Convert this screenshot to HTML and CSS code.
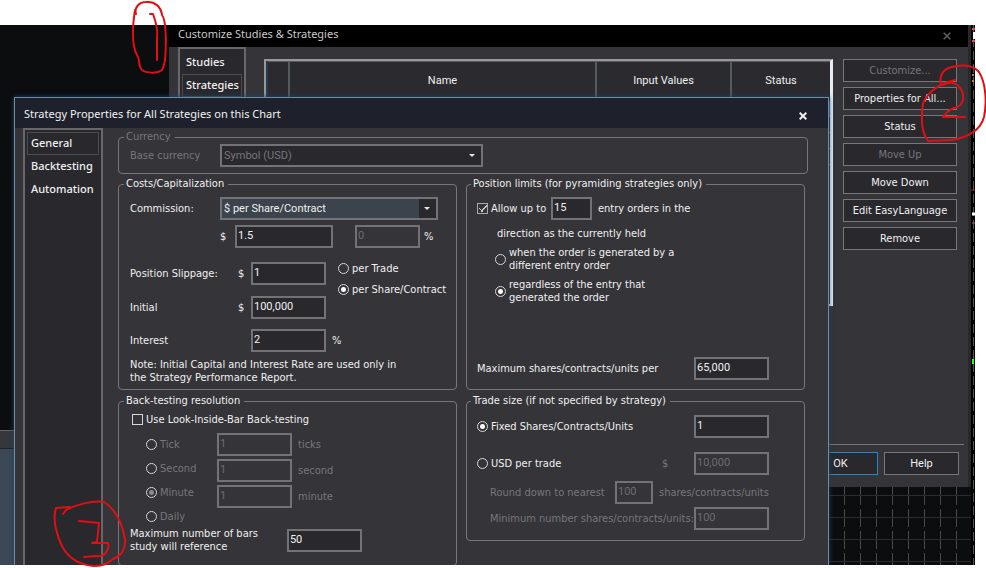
FILE: index.html
```html
<!DOCTYPE html>
<html lang="en">
<head>
<meta charset="utf-8">
<title>Strategy Properties</title>
<link rel="stylesheet" href="styles.css">
</head>
<body>
<main class="desktop">
  <div class="dock" aria-hidden="true"></div>
  <svg class="ticks" viewBox="0 0 4 540" width="4" height="540" aria-hidden="true">
    <path d="M2.500 0V540" stroke="#555" stroke-dasharray="9 4"/>
    <path d="M1 4h3M1 16h3" stroke="#e0455a" stroke-width="2"/><path d="M2 7h2v7h-2z" fill="#fff"/>
    <path d="M1 50h2M1 56h2" stroke="#c87a1e" stroke-width="2"/>
    <path d="M0 165h4" stroke="#c22"/><path d="M1 189h3" stroke="#fff" stroke-width="3"/><path d="M1 198h3" stroke="#a66"/>
    <path d="M1 334h2v5H1z" fill="#1bff1b"/>
  </svg>

  <section class="window studies" aria-label="Customize Studies and Strategies">
    <header class="bar bar-inactive"><h2>Customize Studies &amp; Strategies</h2>
      <button class="close" aria-label="Close studies"><svg viewBox="0 0 8 8" width="8" height="8"><path d="M.7 .7 7.300 7.300M7.300 .7 .7 7.300"/></svg></button></header>
    <div class="studies-body">
      <nav class="side side-small"><a href="#studies">Studies</a><a class="current" href="#strategies">Strategies</a></nav>
      <div class="list">
        <table>
          <thead><tr><th class="c-icon"></th><th>Name</th><th class="c-input">Input Values</th><th class="c-status">Status</th></tr></thead>
          <tbody><tr class="picked"><td></td><td></td><td></td><td></td></tr><tr><td></td><td></td><td></td><td></td></tr><tr><td></td><td></td><td></td><td></td></tr><tr><td></td><td></td><td></td><td></td></tr></tbody>
        </table>
      </div>
      <div class="actions">
        <button class="btn" disabled>Customize...</button>
        <button class="btn">Properties for All...</button>
        <button class="btn">Status</button>
        <button class="btn" disabled>Move Up</button>
        <button class="btn">Move Down</button>
        <button class="btn">Edit EasyLanguage</button>
        <button class="btn">Remove</button>
      </div>
    </div>
    <footer class="studies-foot"><button class="btn primary">OK</button><button class="btn">Help</button></footer>
  </section>

  <section class="window props" aria-label="Strategy Properties">
    <header class="bar"><h1>Strategy Properties for All Strategies on this Chart</h1>
      <button class="close" aria-label="Close properties"><svg viewBox="0 0 8 8" width="8" height="8"><path d="M.7 .7 7.300 7.300M7.300 .7 .7 7.300"/></svg></button></header>
    <div class="props-body">
      <nav class="side"><a class="current" href="#general">General</a><a href="#backtesting">Backtesting</a><a href="#automation">Automation</a></nav>
      <form class="form">
        <fieldset class="currency off">
          <legend>Currency</legend>
          <div class="row"><label class="w90" for="cur">Base currency</label>
            <span class="combo combo-wide"><select id="cur" disabled><option>Symbol (USD)</option></select></span></div>
        </fieldset>

        <div class="groups">
          <fieldset class="costs">
            <legend>Costs/Capitalization</legend>
            <div class="row"><label class="w90" for="com">Commission:</label><span class="combo combo-on"><select id="com"><option>$ per Share/Contract</option></select></span></div>
            <div class="row commission"><label class="w15" for="comv">$</label><input class="w98" id="comv" value="1.5"><input class="w65 pct" id="comp" aria-label="Percent" value="0" disabled><span>%</span></div>
            <div class="split">
              <div class="stack">
                <div class="row"><label class="w108" for="slip">Position Slippage:</label><span class="w13">$</span><input class="w75" id="slip" value="1"></div>
                <div class="row"><label class="w108" for="init">Initial</label><span class="w13">$</span><input class="w75" id="init" value="100,000"></div>
              </div>
              <div class="pair">
                <label class="opt"><input type="radio" name="slip">per Trade</label>
                <label class="opt"><input type="radio" name="slip" checked>per Share/Contract</label>
              </div>
            </div>
            <div class="row interest"><label class="w121" for="int">Interest</label><input class="w75" id="int" value="2"><span class="suffix">%</span></div>
            <p>Note: Initial Capital and Interest Rate are used only in<br>the Strategy Performance Report.</p>
          </fieldset>

          <fieldset class="limits">
            <legend>Position limits (for pyramiding strategies only)</legend>
            <div class="row"><label class="opt w74"><input type="checkbox" checked>Allow up to</label><input class="w41" aria-label="Entry orders" value="15"><span class="suffix">entry orders in the</span></div>
            <div class="indent">
              <p>direction as the currently held</p>
              <label class="opt"><input type="radio" name="lim"><span>when the order is generated by a<br>different entry order</span></label>
              <label class="opt"><input type="radio" name="lim" checked><span>regardless of the entry that<br>generated the order</span></label>
            </div>
            <div class="row ends max"><label for="maxs">Maximum shares/contracts/units per</label><input class="w75" id="maxs" value="65,000"></div>
          </fieldset>

          <fieldset class="resolution">
            <legend>Back-testing resolution</legend>
            <label class="opt"><input type="checkbox">Use Look-Inside-Bar Back-testing</label>
            <div class="res off">
              <div class="res-opts">
                <label class="opt"><input type="radio" name="res" disabled>Tick</label>
                <label class="opt"><input type="radio" name="res" disabled>Second</label>
                <label class="opt"><input type="radio" name="res" checked disabled>Minute</label>
                <label class="opt"><input type="radio" name="res" disabled>Daily</label>
              </div>
              <div class="res-vals">
                <div class="row"><input class="w75" id="rt" value="1" disabled><label class="suffix" for="rt">ticks</label></div>
                <div class="row"><input class="w75" id="rs" value="1" disabled><label class="suffix" for="rs">second</label></div>
                <div class="row"><input class="w75" id="rm" value="1" disabled><label class="suffix" for="rm">minute</label></div>
              </div>
            </div>
            <div class="row bars"><label for="bars">Maximum number of bars<br>study will reference</label><input class="w75" id="bars" value="50"></div>
          </fieldset>

          <fieldset class="trade">
            <legend>Trade size (if not specified by strategy)</legend>
            <div class="row ends"><label class="opt"><input type="radio" name="size" checked>Fixed Shares/Contracts/Units</label><input class="w75" aria-label="Fixed size" value="1"></div>
            <div class="row ends usd"><label class="opt"><input type="radio" name="size">USD per trade</label><span class="row off"><label class="w32" for="usd">$</label><input class="w75" id="usd" value="10,000" disabled></span></div>
            <div class="row nested off"><label class="w123" for="round">Round down to nearest</label><input class="w38" id="round" value="100" disabled><span class="suffix">shares/contracts/units</span></div>
            <div class="row ends nested off min"><label for="min">Minimum number shares/contracts/units:</label><input class="w75" id="min" value="100" disabled></div>
          </fieldset>
        </div>
      </form>
    </div>
  </section>
</main>

<svg class="ink" viewBox="0 0 986 568" width="986" height="568" aria-hidden="true">
  <path d="M136 14C134 8 139 2 146 2C155 1 161 7 162 15C166 20 165 29 166 40C165 50 167 62 162 70C157 74 146 73 142 70C138 66 140 62 138 57C133 49 133 40 133 31C133 22 134 17 135 10"/>
  <path d="M150 14L153 14C156 22 158 30 157 38V60"/>
  <path d="M941 85C939 77 942 69 952 67C962 64 973 65 979 72C986 83 987 103 984 117C980 132 964 138 951 140L928 141C921 132 921 117 923 103C929 91 941 83 955 80"/>
  <path d="M943 85C952 80 960 84 963 94C964 100 962 107 954 108C948 110 945 114 943 117L965 117"/>
  <path d="M70 507L56 508C52 519 57 537 63 548C69 558 80 565 94 566C104 566 108 563 113 559C121 556 126 549 125 539C122 522 115 509 104 502C93 500 75 505 66 510L63 514"/>
  <path d="M79 521L99 523L97 542L92 543L108 543C110 550 104 558 96 556L84 557"/>
</svg>
</body>
</html>
```
FILE: styles.css
```css
:root {
  --panel: #353438;
  --well: #29282d;
  --line: #727277;
  --text: #f0f0f0;
  --dim: #77777b;
}
* { box-sizing: border-box; }
body {
  margin: 0;
  background: #fff;
  color: var(--text);
  font: 11px/13px "DejaVu Sans Condensed", "DejaVu Sans", sans-serif;
  overflow: hidden;
}
h1, h2, p { margin: 0; font-size: inherit; font-weight: inherit; }
button, input, select { font: inherit; color: inherit; margin: 0; }
a { color: inherit; text-decoration: none; }

.desktop {
  position: relative;
  height: calc(100vh - 28px);
  margin: 25px 11px 3px 0;
  overflow: hidden;
  background-color: #0b0d0f;
  background-image:
    repeating-linear-gradient(to bottom, transparent 0 8px, #2a2d2e 8px 9px, transparent 9px 22px),
    repeating-linear-gradient(to bottom, transparent 0 18px, #0b0d0f 18px 22px),
    repeating-linear-gradient(to right, transparent 0 12px, #45484a 12px 13px, transparent 13px 16px);
}
.dock {
  position: absolute;
  left: 0;
  top: 0;
  width: 169px;
  height: 100%;
  background: linear-gradient(#0b0d0f 405px, #66676a 405px 406px, #36373b 406px 423px, #202226 423px 424px, #3c4856 424px);
}
.ticks { position: absolute; right: 0; top: 0; background: #000; }

.window { position: absolute; background: var(--panel); }
.bar { display: flex; align-items: center; justify-content: space-between; font: 11px/16px "Noto Sans", sans-serif; }
.close { display: flex; padding: 0; border: 0; background: none; }
.close path { stroke: currentColor; stroke-width: 2; fill: none; }

.studies { left: 169px; right: 4px; top: 0; height: 462px; display: flex; flex-direction: column; border-right: 3px solid #29292d; }
.bar-inactive { height: 22px; padding: 0 17px 5px 9px; background: #000; color: #c8c8c8; }
.bar-inactive .close { color: #606060; padding-top: 4px; }
.bar-inactive .close path { stroke-width: 1.500; }
.studies-body { flex: 1; display: flex; padding: 0 11px 0 9px; }
.list { flex: 1; height: 247px; margin: 12px 10px 0 18px; padding: 0 0 0 2px; border: 2px solid #98989c; border-right: 3px solid #e6edf5; border-bottom-color: #e6edf5; background: #2b3b4a; }
table { width: 100%; border-collapse: collapse; table-layout: fixed; }
th { height: 39px; padding: 0; border-right: 2px solid #555a61; border-top: 1px solid #5b5b60; background: #2b2a2e; font: 11px/16px Roboto, sans-serif; }
th:last-child { border-right: 0; }
td { height: 16px; padding: 0; border-bottom: 1px solid #6f8da5; }
.picked { background: #2a6ca4; }
.c-icon { width: 21px; }
.c-input { width: 135px; }
.c-status { width: 99px; }
.actions { width: 114px; margin-top: 12px; display: flex; flex-direction: column; gap: 5px; }
.btn { height: 23px; padding: 0; border: 1px solid #77777b; background: var(--well); white-space: nowrap; }
.btn:disabled { color: var(--dim); }
.studies-foot { display: flex; justify-content: flex-end; gap: 6px; height: 43px; margin: 0 4px 0 9px; padding: 7px 5px 0 0; border-top: 1px solid #77777b; }
.studies-foot .btn { width: 75px; font: 11px/16px Roboto, sans-serif; }
.studies-foot .primary { border-color: #2789c8; }

.side { width: 80px; padding: 2px; border: 2px solid #68686c; border-bottom: 0; background: var(--well); font: 500 11px/15px "Noto Sans", sans-serif; }
.side a { display: block; height: 23px; padding: 2px 3px; border: 1px solid transparent; }
.side .current { border-color: #4b4b50; }
.side-small { width: 68px; }

.props { left: 14px; right: 146px; top: 72px; bottom: 0; display: flex; flex-direction: column; border: 1px solid #6f8da0; border-bottom: 0; box-shadow: 0 0 5px #1d4568; overflow: hidden; }
.props .bar { flex: none; height: 30px; padding: 2px 21px 0 9px; background: #1e212b; }
.props .close { padding-top: 4px; }
.props-body { flex: 1; display: flex; min-height: 0; padding-left: 8px; }
.form { flex: 1; padding: 2px 20px 0 15px; }
fieldset { min-width: 0; margin: 0; padding: 6px 0 0 11px; border: 1px solid #77777b; border-radius: 4px; }
legend { height: 14px; margin-left: -6px; padding: 0 4px 0 2px; line-height: 14px; }
.off { color: var(--dim); }
.currency { height: 44px; padding-top: 0; }
.groups { display: grid; grid-template-columns: 1fr 1fr; grid-template-rows: 213px auto; align-items: start; gap: 4px 9px; margin-top: 3px; padding-right: 3px; }
.costs, .limits { height: 100%; }
.row { display: flex; align-items: center; white-space: nowrap; }
.row > label, .row > span { flex: none; }
.ends { justify-content: space-between; }

input:not([type]), select {
  height: 23px;
  padding: 0 1px 2px;
  border: 2px solid var(--line);
  border-radius: 0;
  background: var(--well);
  font: 11px/15px Roboto, sans-serif;
}
input:disabled:not([type]) { background: none; color: #6c6c70; }
select { appearance: none; width: 100%; padding: 0 2px; opacity: 1; }
select:disabled { color: var(--dim); opacity: 1; }
.combo { position: relative; display: block; width: 218px; height: 23px; }
.combo-wide { width: 263px; }
.combo-on select { background: linear-gradient(to left, var(--well) 17px, #3b434c 17px); }
.combo::after { content: ""; position: absolute; right: 8px; top: 10px; border: 3px solid transparent; border-top-color: #e8e8e8; border-bottom: 0; }

.opt { display: flex; align-items: center; gap: 3px; }
[type="radio"], [type="checkbox"] { appearance: none; flex: none; width: 11px; height: 11px; border: 1px solid #d8d8d8; }
[type="radio"] { border-radius: 50%; }
[type="radio"]:checked { background: radial-gradient(circle, #fff 2px, transparent 3px); }
[type="radio"]:checked:disabled { background: radial-gradient(circle, #8a8a8e 2px, transparent 3px); }
[type="checkbox"]:checked { background: linear-gradient(-45deg, transparent 46%, #ccc 46% 56%, transparent 56%) 3px 1px / 6px 7px no-repeat, linear-gradient(45deg, transparent 40%, #ccc 40% 60%, transparent 60%) 1px 4px / 4px 4px no-repeat; }
[type="checkbox"]:checked { border-color: #aaa; }

.w13 { width: 13px; }
.w15 { width: 15px; }
.w32 { width: 32px; }
.w38 { width: 38px; }
.w41 { width: 41px; }
.w65 { width: 65px; }
.w74 { width: 74px; }
.w75 { width: 75px; flex: none; }
.w90 { width: 90px; }
.w98 { width: 98px; }
.w108 { width: 108px; }
.w121 { width: 121px; }
.w123 { width: 123px; }
.suffix { margin-left: 6px; }

.commission { margin-top: 5px; padding-left: 90px; }
.pct { margin: 0 4px 0 22px; }
.split { display: flex; gap: 12px; margin-top: 14px; }
.stack { display: flex; flex-direction: column; gap: 11px; }
.pair { display: flex; flex-direction: column; gap: 8px; white-space: nowrap; }
.interest { margin: 10px 0 6px; }

.limits, .trade { padding-left: 10px; padding-right: 35px; }
.indent { display: flex; flex-direction: column; gap: 6px; padding: 7px 0 0 18px; }
.indent p { padding-left: 2px; }
.max { margin-top: 53px; }

.resolution { padding: 5px 0 0 13px; height: 172px; }
.resolution legend { margin-left: -8px; }
.res { display: flex; margin-top: 7px; }
.res-opts { width: 85px; padding: 5px 0 0 14px; display: flex; flex-direction: column; gap: 11px; }
.res-vals { display: flex; flex-direction: column; gap: 3px; }
.bars { gap: 29px; margin: 4px 0 0 -2px; }

.trade { height: 147px; padding-top: 7px; }
.usd { margin-top: 14px; }
.nested { padding-left: 13px; margin-top: 6px; }
.nested .w123 { margin-right: 2px; }
.min { margin-top: 3px; }

.ink { position: absolute; left: 0; top: 0; pointer-events: none; }
.ink path { fill: none; stroke: #e00f14; stroke-width: 2; stroke-linecap: round; stroke-linejoin: round; }
```
